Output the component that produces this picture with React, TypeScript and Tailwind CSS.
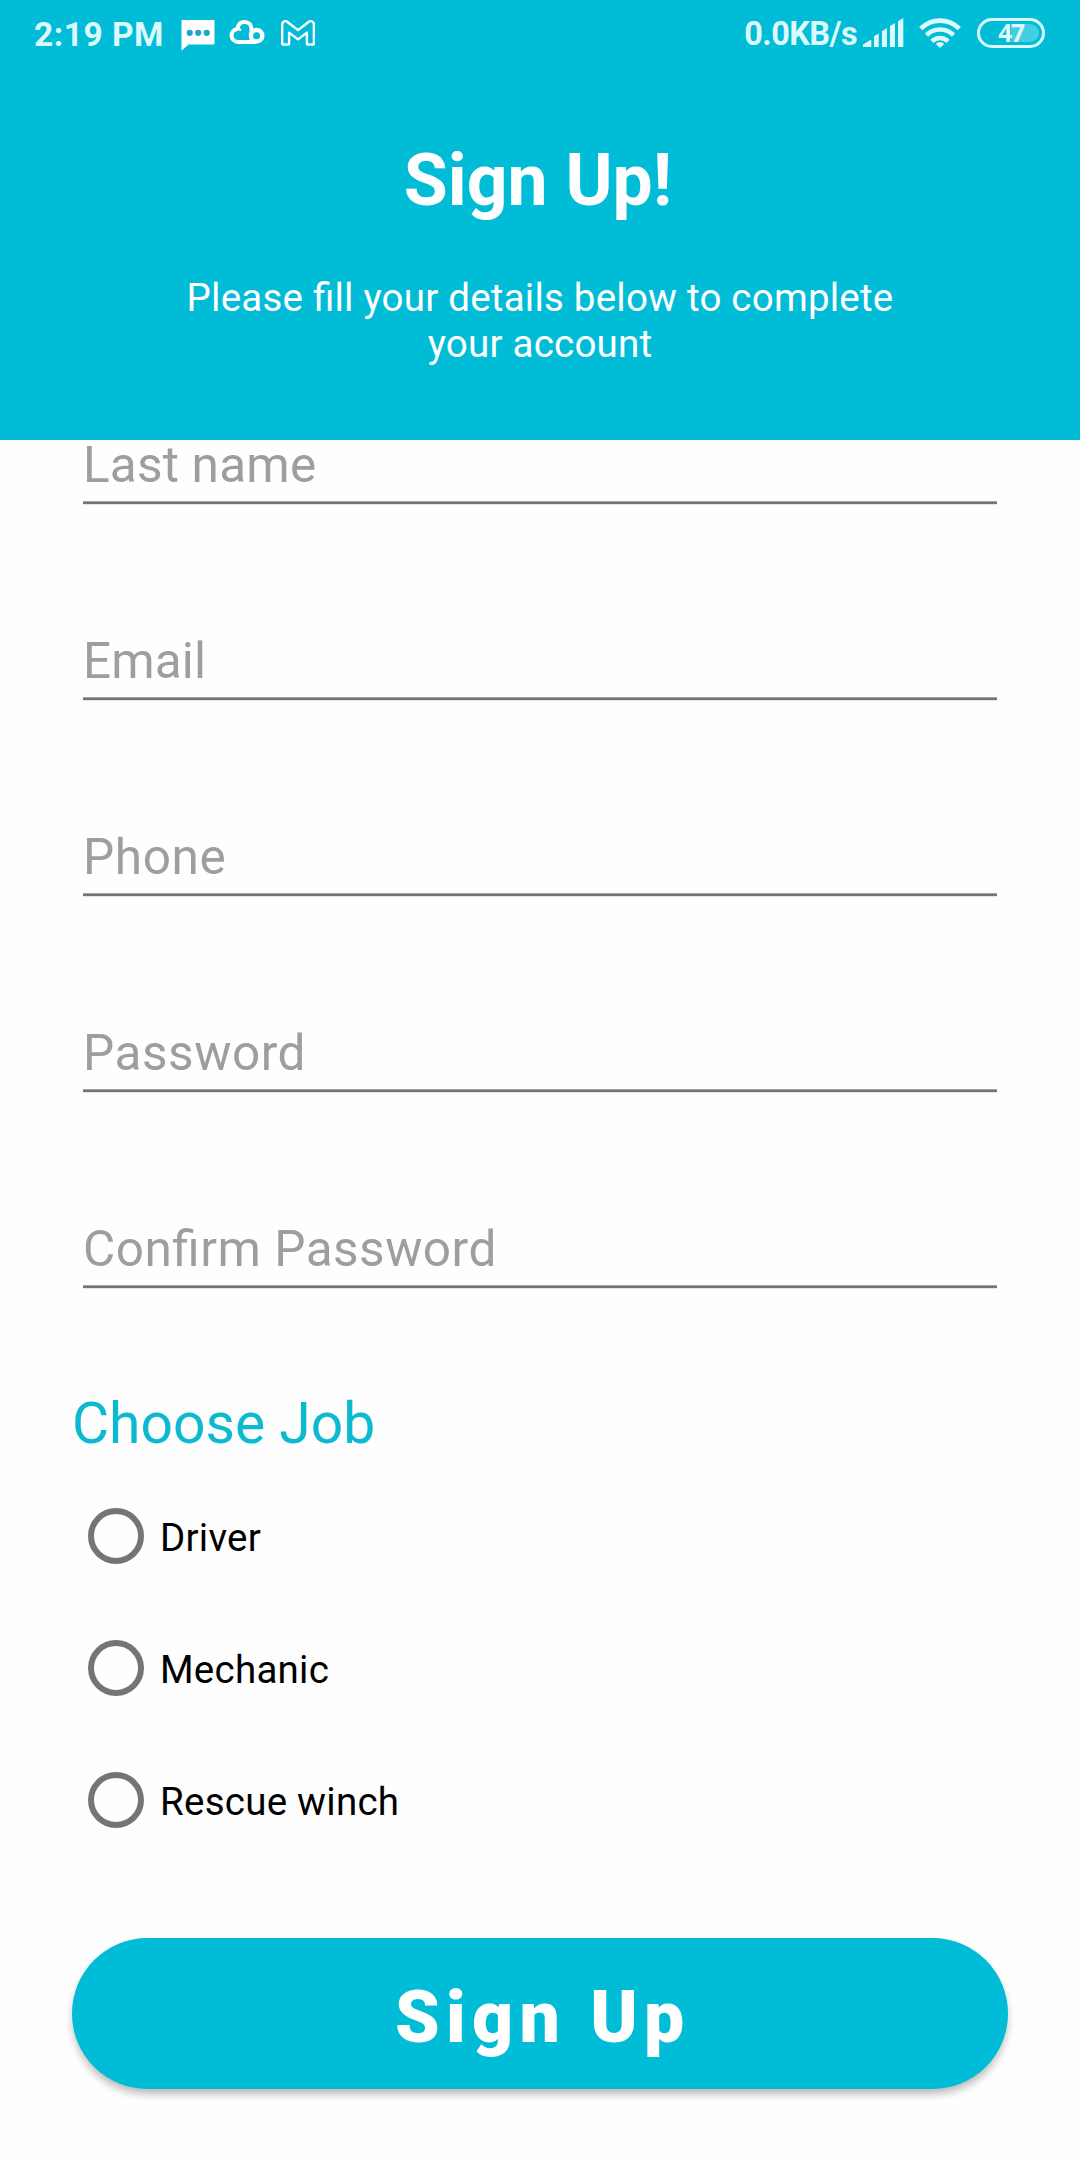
import React from "react";

const fields = [
  { label: "Last name", tracking: "tracking-[0.2px]" },
  { label: "Email", tracking: "tracking-[0.1px]" },
  { label: "Phone", tracking: "tracking-[0.6px]" },
  { label: "Password", tracking: "tracking-[0.55px]" },
  { label: "Confirm Password", tracking: "tracking-[0.5px]" },
];
const jobs = ["Driver", "Mechanic", "Rescue winch"];

function MessageIcon() {
  return (
    <svg className="ml-[18px] h-[31px] w-[34px]" viewBox="0 0 34 31">
      <path d="M1.5 0h31a1 1 0 0 1 1 1v22.5a1 1 0 0 1-1 1H7.500L.5 30.700V1a1 1 0 0 1 1-1Z" fill="#fff" />
      <g fill="#1aa9c2">
        <circle cx="8.700" cy="12.800" r="3.100" />
        <circle cx="17.200" cy="12.800" r="3.100" />
        <circle cx="25.700" cy="12.800" r="3.100" />
      </g>
    </svg>
  );
}

function CloudIcon() {
  return (
    <svg className="ml-[14px] h-[25px] w-[36px]" viewBox="0 0 36 25" fill="none" stroke="#fff" strokeWidth="4">
      <path d="M27.500 22H8.600A6.600 6.600 0 0 1 8.200 8.900C9.200 4.700 11.800 2 15.400 2c4.300 0 7.100 3 7.100 7.100v5.500" strokeLinejoin="round" />
      <path d="M8.200 8.900c1.200 0 2.200.3 3 .9" strokeLinecap="round" strokeWidth="2.400" />
      <circle cx="27.600" cy="15.700" r="5.700" strokeWidth="4.400" />
    </svg>
  );
}

function MailIcon() {
  return (
    <svg className="ml-[16px] h-[26px] w-[34px]" viewBox="0 0 34 26" fill="none" stroke="#fff" strokeWidth="2.400" strokeLinejoin="round">
      <path d="M2 24.500h5.300a.8.800 0 0 0 .8-.8V12.600L17 19.400l8.900-6.800v11.100a.8.800 0 0 0 .8.800H32a.9.900 0 0 0 .9-.9V4.300c0-2.600-2.900-4.100-5-2.500L17 10.100 6.100 1.800c-2.100-1.600-4.900-.1-4.900 2.500v19.300c0 .5.400.9.900.9Z" />
    </svg>
  );
}

function SignalIcon() {
  return (
    <svg className="h-[29px] w-[41px]" viewBox="0 0 41 29" fill="#dcf9fd">
      <path d="M0 29V26.500L8.300 21.500V29ZM11 29V18.300L15.700 15.500V29ZM19 29V13.200L24 10V29ZM27 29V8L32 5V29ZM35 29V3.200L40.300 0V29Z" />
    </svg>
  );
}

function WifiIcon() {
  return (
    <svg className="ml-[15px] h-[30px] w-[42px]" viewBox="0 0 42 30" fill="none" stroke="#dcf9fd" strokeWidth="4.600">
      <path d="M1.700 10.700a27 27 0 0 1 38.600 0" />
      <path d="M7.500 17.200a19 19 0 0 1 27 0" />
      <path d="M13 23.300a11.500 11.500 0 0 1 16 0" />
      <path d="M21 30l-4.200-4a5.500 5.500 0 0 1 8.400 0Z" fill="#dcf9fd" stroke="none" />
    </svg>
  );
}

function Battery() {
  return (
    <div className="relative ml-4 h-[30px] w-[68px] rounded-full border-[3px] border-[#dcf9fd] p-[3px]">
      <div className="ml-auto h-full w-[28px] rounded-r-full bg-[#45cee1]" />
      <span className="absolute inset-0 flex items-center justify-center font-['Open_Sans',sans-serif] text-[24.5px] leading-none font-bold tracking-[-1.2px]">
        47
      </span>
    </div>
  );
}

function StatusBar() {
  return (
    <div className="flex h-[69px] items-start pr-[35px] pl-[34px] text-[#dcf9fd]">
      <span className="w-[129px] text-[33.5px] leading-[69px] font-bold tracking-[0.5px] whitespace-nowrap">2:19 PM</span>
      <div className="flex items-start pt-5">
        <MessageIcon />
        <CloudIcon />
        <MailIcon />
      </div>
      <div className="ml-auto flex items-start">
        <span className="mr-[6px] text-[32.5px] leading-[69px] font-bold tracking-[-0.6px] whitespace-nowrap">0.0KB/s</span>
        <div className="flex pt-[18px]">
          <SignalIcon />
          <WifiIcon />
          <Battery />
        </div>
      </div>
    </div>
  );
}

export default function App() {
  return (
    <div className="flex h-[2160px] w-[1080px] flex-col overflow-hidden bg-[#fefefe] font-['Roboto',sans-serif]">
      <header className="z-10 h-[440px] shrink-0 bg-[#00bcd7] text-center text-white">
        <StatusBar />
        <h1 className="mt-[70px] pr-[4px] text-[71.5px] leading-[84px] font-bold">Sign Up!</h1>
        <p className="mt-[52px] text-[38.5px] leading-[46px] tracking-[0.22px] [font-feature-settings:'liga'_1]">
          Please fill your details below to complete
          <br />
          your account
        </p>
      </header>
      <main className="-mt-[131px] flex flex-col px-[72px]">
        {fields.map(({ label, tracking }) => (
          <label key={label} className="mx-[11px] flex h-[196px] flex-col justify-end">
            <span className={`mb-[6px] text-[49.5px] leading-[60px] text-[#9e9e9e] [font-feature-settings:'liga'_1] ${tracking}`}>
              {label}
            </span>
            <span className="h-1 border-t border-b border-t-[#a3a3a3] border-b-[#e6e6e6] bg-[#757575]" />
          </label>
        ))}
        <h2 className="mt-[101px] text-[57px] leading-[68px] text-[#0bb9d1]">Choose Job</h2>
        <div className="mt-[12px] flex flex-col">
          {jobs.map((job) => (
            <label key={job} className="flex h-[132px] items-center pl-4">
              <span className="size-[56px] rounded-full border-[6px] border-[#757575]" />
              <span className="ml-4 pt-1 text-[38.5px] leading-[46px] tracking-[0.25px] text-black">{job}</span>
            </label>
          ))}
        </div>
        <button className="mt-[72px] h-[151px] rounded-full bg-[#00bcd7] pt-[8px] pl-[5.5px] text-[71.5px] leading-[84px] font-black tracking-[6.3px] text-white shadow-[0_6px_8px_-1px_rgba(0,0,0,0.28)]">
          Sign Up
        </button>
      </main>
    </div>
  );
}
